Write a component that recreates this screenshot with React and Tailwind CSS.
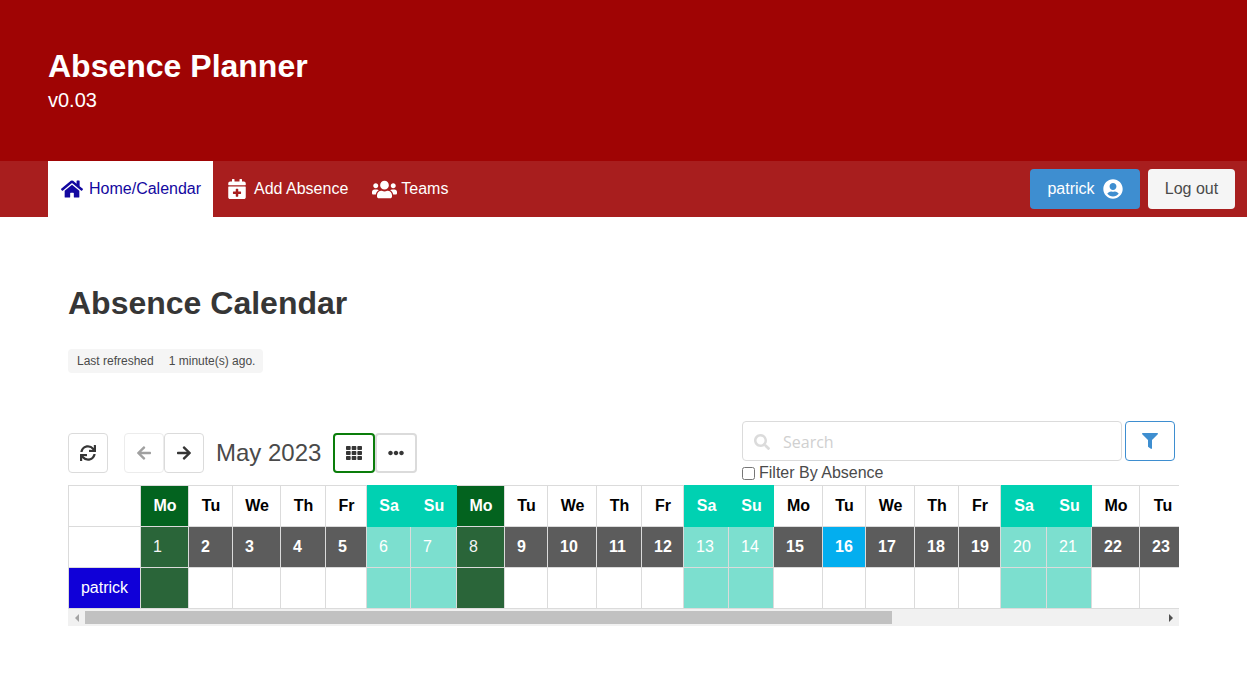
import React from "react";
import { FaHome, FaCalendarPlus, FaUsers, FaUserCircle, FaSync, FaArrowLeft, FaArrowRight, FaTh, FaEllipsisH, FaFilter, FaSearch } from "react-icons/fa";

const days = [
  ["Mo", 1, "h", "w-[48px]"], ["Tu", 2, "", "w-[44px]"], ["We", 3, "", "w-[48px]"], ["Th", 4, "", "w-[45px]"], ["Fr", 5, "", "w-[41px]"],
  ["Sa", 6, "w", "w-[44px]"], ["Su", 7, "w", "w-[46px]"], ["Mo", 8, "h", "w-[48px]"], ["Tu", 9, "", "w-[43px]"], ["We", 10, "", "w-[49px]"],
  ["Th", 11, "", "w-[45px]"], ["Fr", 12, "", "w-[42px]"], ["Sa", 13, "w", "w-[45px]"], ["Su", 14, "w", "w-[45px]"], ["Mo", 15, "", "w-[49px]"],
  ["Tu", 16, "t", "w-[43px]"], ["We", 17, "", "w-[49px]"], ["Th", 18, "", "w-[44px]"], ["Fr", 19, "", "w-[42px]"], ["Sa", 20, "w", "w-[46px]"],
  ["Su", 21, "w", "w-[45px]"], ["Mo", 22, "", "w-[48px]"], ["Tu", 23, "", "w-[46px]"],
];

const headCls = { h: "bg-[#03631f] text-white", w: "bg-[#00d1b2] text-white border-[#00d1b2]!", "": "bg-white text-black", t: "bg-white text-black" };
const numCls = { h: "bg-[#2a6539] text-[#f4f4f4] font-normal", w: "bg-[#7cdfcf] text-white font-normal", "": "bg-[#5c5c5c] text-white font-bold", t: "bg-[#03aeef] text-white font-bold" };
const rowCls = { h: "bg-[#2a6539]", w: "bg-[#7cdfcf]", "": "bg-white", t: "bg-white" };

function IconBtn({ children, cls }) {
  return <button className={`w-10 h-10 flex items-center justify-center rounded bg-white border ${cls}`}>{children}</button>;
}

export default function App() {
  return (
    <div className="min-h-[700px] bg-white text-[16px] text-[#4a4a4a] font-['Liberation_Sans',Arial,sans-serif]">
      <header className="h-[161px] bg-[#9f0404] px-12 pt-12 text-white">
        <h1 className="text-[32px] font-bold leading-[36px]">Absence Planner</h1>
        <p className="mt-1 text-[20px] leading-[25px]">v0.03</p>
      </header>

      <nav className="h-14 bg-[#a81e1e] pl-12 pr-3 flex items-center justify-between text-white">
        <div className="flex h-full items-stretch">
          <a className="w-[165px] bg-white text-[#1308a0] flex items-center pl-[13px] gap-[6px]">
            <FaHome className="text-[22px]" />
            <span>Home/Calendar</span>
          </a>
          <a className="flex items-center pl-[14px] pr-3 gap-[7px]">
            <FaCalendarPlus className="text-[20px]" />
            <span>Add Absence</span>
          </a>
          <a className="flex items-center pl-3 gap-1">
            <FaUsers className="text-[25px]" />
            <span>Teams</span>
          </a>
        </div>
        <div className="flex items-center gap-2">
          <button className="w-[110px] h-10 rounded bg-[#3e8ed0] flex items-center justify-center gap-2 text-white">
            patrick <FaUserCircle className="text-[20px]" />
          </button>
          <button className="w-[87px] h-10 rounded bg-[#f5f5f5] text-[#4a4a4a]">Log out</button>
        </div>
      </nav>

      <main className="px-[68px] pt-[68px]">
        <h2 className="text-[32px] font-bold leading-[36px] text-[#363636]">Absence Calendar</h2>
        <div className="mt-[28px] w-[195px] h-6 rounded bg-[#f5f5f5] flex items-center pl-[9px] text-[12px] text-[#4a4a4a]">
          <span>Last refreshed</span>
          <span className="ml-[15px]">1 minute(s) ago.</span>
        </div>

        <div className="mt-12 flex items-end justify-between h-[64px] pr-[4px]">
          <div className="flex items-center h-10 mb-[12px]">
            <IconBtn cls="border-[#dbdbdb] text-[#363636]"><FaSync className="text-[16px]" /></IconBtn>
            <div className="ml-4 flex">
              <IconBtn cls="border-[#ececec] text-[#a0a0a0]"><FaArrowLeft className="text-[16px]" /></IconBtn>
              <IconBtn cls="border-[#dbdbdb] text-[#363636]"><FaArrowRight className="text-[16px]" /></IconBtn>
            </div>
            <span className="ml-3 text-[24px] leading-[30px] text-[#4a4a4a]">May 2023</span>
            <button className="ml-3 w-[42px] h-10 flex items-center justify-center rounded bg-white border-2 border-[#0a7d0a] text-[#363636]"><FaTh className="text-[16px]" /></button>
            <button className="w-[42px] h-10 flex items-center justify-center rounded bg-white border-2 border-[#dbdbdb] text-[#363636]"><FaEllipsisH className="text-[16px]" /></button>
          </div>
          <div className="w-[433px] h-[64px]">
            <div className="flex justify-between">
              <div className="relative w-[380px] h-10">
                <FaSearch className="absolute left-3 top-[13px] text-[16px] text-[#dbdbdb]" />
                <input readOnly placeholder="Search" className="w-full h-full rounded border border-[#dbdbdb] pl-10 pt-[2px] text-[16px] font-['Open_Sans',sans-serif] placeholder:text-[#d0d0d0] outline-none" />
              </div>
              <button className="w-[50px] h-10 flex items-center justify-center rounded bg-white border border-[#3e8ed0] text-[#3e8ed0]"><FaFilter className="text-[16px]" /></button>
            </div>
            <label className="mt-[1px] flex items-center h-[22px] leading-[22px]">
              <input type="checkbox" readOnly className="w-[13px] h-[13px] mr-1" />
              Filter By Absence
            </label>
          </div>
        </div>

        <div className="w-[1111px] overflow-hidden">
          <table className="table-fixed border-collapse w-[1117px] text-[16px] [&_td]:border [&_td]:border-[#dbdbdb]">
            <colgroup>
              <col className="w-[72px]" />
              {days.map((d, i) => <col key={i} className={d[3]} />)}
            </colgroup>
            <tbody>
              <tr className="h-[41px]">
                <td className="bg-white"></td>
                {days.map((d, i) => (
                  <td key={i} className={`pl-px text-center font-bold ${headCls[d[2]]}`}>{d[0]}</td>
                ))}
              </tr>
              <tr className="h-[41px]">
                <td className="bg-white"></td>
                {days.map((d, i) => (
                  <td key={i} className={`pl-3 ${numCls[d[2]]}`}>{d[1]}</td>
                ))}
              </tr>
              <tr className="h-[41px]">
                <td className="bg-[#1000d8] text-white text-center">patrick</td>
                {days.map((d, i) => <td key={i} className={rowCls[d[2]]}></td>)}
              </tr>
            </tbody>
          </table>
          <div className="h-[17px] bg-[#f1f1f1] flex items-center">
            <div className="w-[17px] flex justify-center"><span className="border-y-[4px] border-y-transparent border-r-[4px] border-r-[#a3a3a3]"></span></div>
            <div className="w-[807px] h-[13px] bg-[#c1c1c1]"></div>
            <div className="ml-auto w-[17px] flex justify-center"><span className="border-y-[4px] border-y-transparent border-l-[4px] border-l-[#505050]"></span></div>
          </div>
        </div>
      </main>
    </div>
  );
}
